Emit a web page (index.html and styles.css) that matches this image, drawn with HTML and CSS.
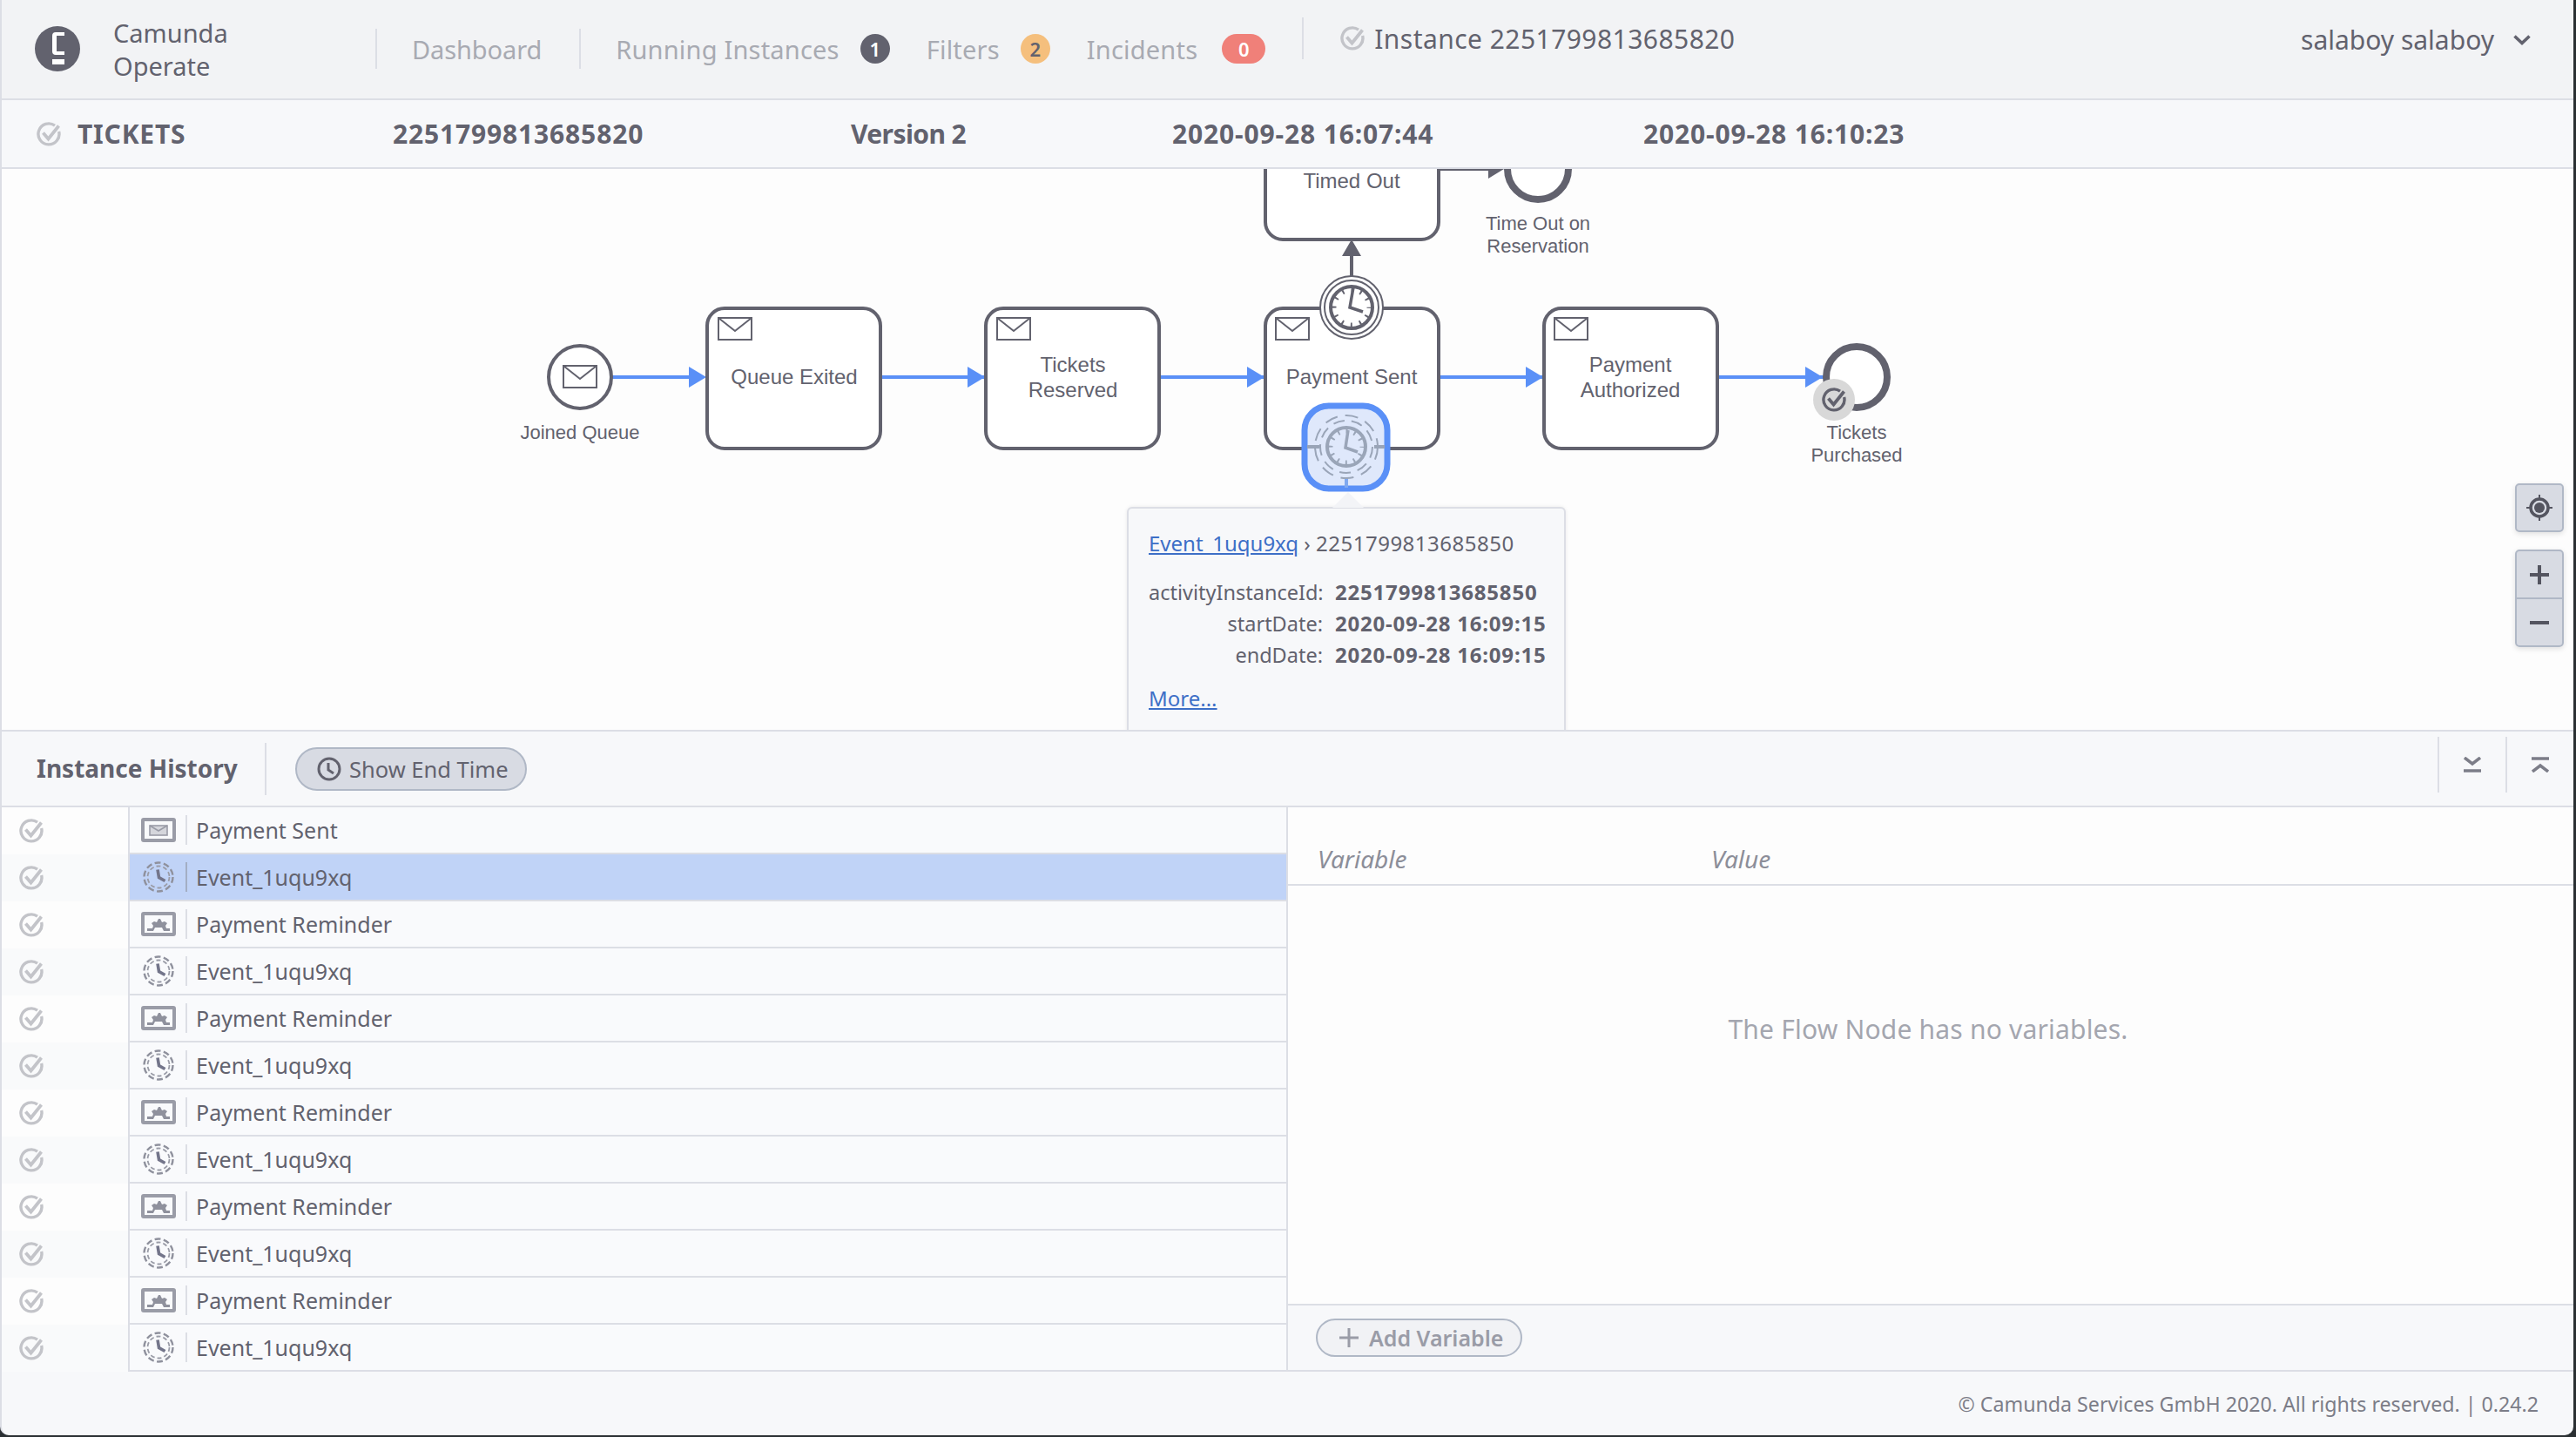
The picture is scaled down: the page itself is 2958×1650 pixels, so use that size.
FILE: index.html
```html
<!DOCTYPE html>
<html>
<head>
  <meta charset="UTF-8">
  <title>Camunda Operate</title>
  <link rel="stylesheet" href="styles.css">
</head>
<body>

  <svg class="sprites" width="0" height="0">
    <symbol id="state-done" viewBox="0 0 28 28">
      <path d="M21 4.200A12 12 0 1 0 25.600 11" fill="none" stroke="currentColor" stroke-width="3.400"/>
      <path d="M7.500 12.500l6 7L25.500 4.500" fill="none" stroke="currentColor" stroke-width="3.800"/>
    </symbol>
    <symbol id="row-msg" viewBox="0 0 40 28">
      <rect x="2" y="2" width="36" height="24" rx="1" fill="none" stroke="#9a9ca7" stroke-width="4"/>
      <rect x="10" y="9" width="20" height="11" fill="#d5d6dc" stroke="#9a9ca7" stroke-width="1.600"/>
      <path d="M10 9l10 6 10-6" fill="none" stroke="#9a9ca7" stroke-width="1.600"/>
    </symbol>
    <symbol id="row-task" viewBox="0 0 40 28">
      <rect x="2" y="2" width="36" height="24" rx="1" fill="none" stroke="#9a9ca7" stroke-width="4"/>
      <path d="M7 22h7l2-4h8l2 4h7v-3h-4l-1-3 2-3-3-2-3 1-2-4h-2l-2 4-3-1-3 2 2 3-1 3H7z" fill="#8f919d"/>
    </symbol>
    <symbol id="row-timer" viewBox="0 0 36 36">
      <circle cx="18" cy="18" r="16.500" fill="none" stroke="#8f919d" stroke-width="2.400" stroke-dasharray="7 3.400"/>
      <circle cx="18" cy="18" r="12.500" fill="none" stroke="#9a9ca7" stroke-width="1.800" stroke-dasharray="5 3"/>
      <path d="M17 9.500l1.500 9 7 4" fill="none" stroke="#73758a" stroke-width="3.600"/>
    </symbol>
    <symbol id="envelope" viewBox="0 0 40 27">
      <rect x="1" y="1" width="38" height="25" fill="#fff" stroke="#62626e" stroke-width="2"/>
      <path d="M1 1l19 15L39 1" fill="none" stroke="#62626e" stroke-width="2"/>
    </symbol>
  </svg>

  <div class="app">

    <header class="topbar">
      <svg class="logo" viewBox="0 0 52 52">
        <circle cx="26" cy="26" r="26" fill="#62626e"/>
        <path d="M34 7H24q-4 0-4 4v18q0 4 4 4h10v-4h-9V11h9z" fill="#fff"/>
        <rect x="20" y="38" width="14" height="6" fill="#fff"/>
      </svg>
      <div class="brand">Camunda<br>Operate</div>
      <nav class="nav">
        <a class="nav-link nav-first nav-home">Dashboard</a>
        <a class="nav-link nav-first">Running Instances<span class="badge badge-dark">1</span></a>
        <a class="nav-link">Filters<span class="badge badge-orange">2</span></a>
        <a class="nav-link">Incidents<span class="badge badge-red">0</span></a>
      </nav>
      <div class="instance-title">
        <svg class="state-icon"><use href="#state-done"/></svg>
        Instance 2251799813685820
      </div>
      <div class="user">
        salaboy salaboy
        <svg class="chevron" viewBox="0 0 20 12"><path d="M1.500 1.500L10 9.500l8.500-8" fill="none" stroke="#62626e" stroke-width="3.600"/></svg>
      </div>
    </header>

    <section class="summary">
      <div class="summary-name">
        <svg class="state-icon"><use href="#state-done"/></svg>
        TICKETS
      </div>
      <div>2251799813685820</div>
      <div class="summary-version">Version 2</div>
      <div>2020-09-28 16:07:44</div>
      <div>2020-09-28 16:10:23</div>
    </section>

    <section class="diagram">
      <svg class="bpmn" viewBox="0 194 2958 644" width="2958" height="644">
        <!-- sequence flows -->
        <g class="flow">
          <path d="M703 433h90"/><path d="M1012 433h121"/><path d="M1332 433h122"/><path d="M1653 433h121"/><path d="M1973 433h122"/>
        </g>
        <g class="flow-head">
          <path d="M791 421l20 12-20 12z"/><path d="M1111 421l20 12-20 12z"/><path d="M1432 421l20 12-20 12z"/><path d="M1752 421l20 12-20 12z"/><path d="M2073 421l20 12-20 12z"/>
        </g>
        <path class="grey-flow" d="M1552 318v-26M1653 194h58"/>
        <path class="grey-head" d="M1552 275l11 19h-22zM1727 194l-18 11v-22z"/>

        <!-- tasks -->
        <g class="task">
          <rect x="1453" y="114" width="199" height="161" rx="20"/>
          <rect x="812" y="354" width="199" height="161" rx="20"/>
          <rect x="1132" y="354" width="199" height="161" rx="20"/>
          <rect x="1453" y="354" width="199" height="161" rx="20"/>
          <rect x="1773" y="354" width="199" height="161" rx="20"/>
        </g>
        <use href="#envelope" x="824" y="364" width="40" height="27"/>
        <use href="#envelope" x="1144" y="364" width="40" height="27"/>
        <use href="#envelope" x="1464" y="364" width="40" height="27"/>
        <use href="#envelope" x="1784" y="364" width="40" height="27"/>

        <!-- events -->
        <circle class="event" cx="666" cy="433" r="36"/>
        <use href="#envelope" x="646" y="419" width="40" height="27"/>
        <circle class="event-end" cx="2132" cy="433" r="35"/>
        <circle class="event-end" cx="1766" cy="194" r="35"/>

        <!-- timer on top of Payment Sent -->
        <circle class="ring" cx="1552" cy="353" r="36"/>
        <circle class="ring" cx="1552" cy="353" r="31"/>
        <circle class="clock" cx="1552" cy="353" r="24"/>
        <circle class="clock-ticks" cx="1552" cy="353" r="20" stroke-dasharray="2 8.470" stroke-dashoffset="1"/>
        <path class="clock-hands" d="M1554 330l-4 23 15 5"/>

        <!-- selected timer -->
        <rect class="selected" x="1498" y="466" width="95" height="95" rx="28"/>
        <path class="stub" d="M1501 513h14M1578 513h12"/>
        <path class="stub-blue" d="M1546 548v12"/>
        <circle class="sel-ring" cx="1546" cy="513" r="36" stroke-dasharray="15 9"/>
        <circle class="sel-ring" cx="1546" cy="513" r="30" stroke-dasharray="13 8"/>
        <circle class="sel-clock" cx="1546" cy="513" r="22"/>
        <circle class="sel-ticks" cx="1546" cy="513" r="18" stroke-dasharray="2 7.420" stroke-dashoffset="1"/>
        <path class="sel-hands" d="M1548 494l-3 20 14 5"/>

        <!-- completed badge -->
        <circle cx="2106" cy="459" r="24" fill="#d8d8d8"/>
        <use href="#state-done" class="badge-check" x="2092" y="445" width="28" height="28"/>

        <g class="label">
          <text x="912" y="441">Queue Exited</text>
          <text x="1232" y="427">Tickets</text>
          <text x="1232" y="456">Reserved</text>
          <text x="1552" y="441">Payment Sent</text>
          <text x="1872" y="427">Payment</text>
          <text x="1872" y="456">Authorized</text>
          <text x="1552" y="216">Timed Out</text>
        </g>
        <g class="label-small">
          <text x="666" y="504">Joined Queue</text>
          <text x="1766" y="264">Time Out on</text>
          <text x="1766" y="290">Reservation</text>
          <text x="2132" y="504">Tickets</text>
          <text x="2132" y="530">Purchased</text>
        </g>
      </svg>

      <div class="popover">
        <div class="popover-arrow"></div>
        <div class="popover-title"><a>Event_1uqu9xq</a> › <span class="digits">2251799813685850</span></div>
        <dl class="popover-data">
          <dt>activityInstanceId:</dt><dd>2251799813685850</dd>
          <dt>startDate:</dt><dd>2020-09-28 16:09:15</dd>
          <dt>endDate:</dt><dd>2020-09-28 16:09:15</dd>
        </dl>
        <a class="popover-more">More...</a>
      </div>

      <div class="controls">
        <button class="ctl">
          <svg viewBox="0 0 32 32" width="32" height="32">
            <circle cx="16" cy="16" r="10" fill="none" stroke="#545560" stroke-width="3.500"/>
            <circle cx="16" cy="16" r="6" fill="#545560"/>
            <path d="M16 1v6M16 25v6M1 16h6M25 16h6" stroke="#545560" stroke-width="2"/>
          </svg>
        </button>
        <div class="ctl-group">
          <button class="ctl ctl-top">
            <svg viewBox="0 0 22 22" width="22" height="22"><path d="M0 11h22M11 0v22" stroke="#545560" stroke-width="4"/></svg>
          </button>
          <button class="ctl ctl-bottom">
            <svg viewBox="0 0 22 22" width="22" height="22"><path d="M0 11h22" stroke="#545560" stroke-width="4"/></svg>
          </button>
        </div>
      </div>
    </section>

    <section class="history-bar">
      <h2>Instance History</h2>
      <button class="pill">
        <svg viewBox="0 0 28 28" width="28" height="28">
          <circle cx="14" cy="14" r="12" fill="none" stroke="#62626e" stroke-width="3"/>
          <path d="M13 7v8l6 4" fill="none" stroke="#62626e" stroke-width="3"/>
        </svg>
        Show End Time
      </button>
      <div class="bar-actions">
        <button class="bar-btn">
          <svg viewBox="0 0 20 18" width="20" height="18"><path d="M1 1l9 7 9-7" fill="none" stroke="#7c7d88" stroke-width="3.500"/><path d="M0 16h20" stroke="#7c7d88" stroke-width="3.500"/></svg>
        </button>
        <button class="bar-btn">
          <svg viewBox="0 0 20 18" width="20" height="18"><path d="M0 2h20" stroke="#7c7d88" stroke-width="3.500"/><path d="M1 17l9-7 9 7" fill="none" stroke="#7c7d88" stroke-width="3.500"/></svg>
        </button>
      </div>
    </section>

    <section class="panels">
      <div class="history">
        <div class="row"><div class="cell-state"><svg class="state-icon"><use href="#state-done"/></svg></div><div class="cell-name"><svg class="type-icon"><use href="#row-msg"/></svg><span>Payment Sent</span></div></div>
        <div class="row row-alt row-selected"><div class="cell-state"><svg class="state-icon"><use href="#state-done"/></svg></div><div class="cell-name"><svg class="type-icon"><use href="#row-timer"/></svg><span>Event_1uqu9xq</span></div></div>
        <div class="row"><div class="cell-state"><svg class="state-icon"><use href="#state-done"/></svg></div><div class="cell-name"><svg class="type-icon"><use href="#row-task"/></svg><span>Payment Reminder</span></div></div>
        <div class="row row-alt"><div class="cell-state"><svg class="state-icon"><use href="#state-done"/></svg></div><div class="cell-name"><svg class="type-icon"><use href="#row-timer"/></svg><span>Event_1uqu9xq</span></div></div>
        <div class="row"><div class="cell-state"><svg class="state-icon"><use href="#state-done"/></svg></div><div class="cell-name"><svg class="type-icon"><use href="#row-task"/></svg><span>Payment Reminder</span></div></div>
        <div class="row row-alt"><div class="cell-state"><svg class="state-icon"><use href="#state-done"/></svg></div><div class="cell-name"><svg class="type-icon"><use href="#row-timer"/></svg><span>Event_1uqu9xq</span></div></div>
        <div class="row"><div class="cell-state"><svg class="state-icon"><use href="#state-done"/></svg></div><div class="cell-name"><svg class="type-icon"><use href="#row-task"/></svg><span>Payment Reminder</span></div></div>
        <div class="row row-alt"><div class="cell-state"><svg class="state-icon"><use href="#state-done"/></svg></div><div class="cell-name"><svg class="type-icon"><use href="#row-timer"/></svg><span>Event_1uqu9xq</span></div></div>
        <div class="row"><div class="cell-state"><svg class="state-icon"><use href="#state-done"/></svg></div><div class="cell-name"><svg class="type-icon"><use href="#row-task"/></svg><span>Payment Reminder</span></div></div>
        <div class="row row-alt"><div class="cell-state"><svg class="state-icon"><use href="#state-done"/></svg></div><div class="cell-name"><svg class="type-icon"><use href="#row-timer"/></svg><span>Event_1uqu9xq</span></div></div>
        <div class="row"><div class="cell-state"><svg class="state-icon"><use href="#state-done"/></svg></div><div class="cell-name"><svg class="type-icon"><use href="#row-task"/></svg><span>Payment Reminder</span></div></div>
        <div class="row row-alt"><div class="cell-state"><svg class="state-icon"><use href="#state-done"/></svg></div><div class="cell-name"><svg class="type-icon"><use href="#row-timer"/></svg><span>Event_1uqu9xq</span></div></div>
      </div>

      <div class="variables">
        <div class="var-head"><span class="var-col">Variable</span><span>Value</span></div>
        <div class="var-empty">The Flow Node has no variables.</div>
        <div class="var-foot">
          <button class="pill pill-off">
            <svg viewBox="0 0 22 22" width="22" height="22"><path d="M0 11h22M11 0v22" stroke="#9a9ca7" stroke-width="3"/></svg>
            Add Variable
          </button>
        </div>
      </div>
    </section>

    <footer class="footer">© Camunda Services GmbH 2020. All rights reserved. | 0.24.2</footer>

  </div>

</body>
</html>
```

FILE: styles.css
```css
* { box-sizing: border-box; }
body { margin: 0; background: #2b3033; font-family: "Noto Sans", sans-serif; color: #62626e; overflow: hidden; }
button { font-family: inherit; cursor: pointer; }
.sprites { position: absolute; }

.app { width: 2955px; height: 1648px; display: flex; flex-direction: column; background: #f7f8fa; border-left: 2px solid #dcdee5; border-radius: 0 0 10px 10px; overflow: hidden; }

/* top bar */
.topbar { height: 115px; flex: none; display: flex; align-items: flex-start; background: #f2f3f5; border-bottom: 2px solid #dcdee5; margin-left: -2px; }
.logo { width: 52px; height: 52px; margin: 30px 0 0 40px; flex: none; }
.brand { width: 301px; margin: 19px 0 0 38px; font-size: 29px; line-height: 38px; flex: none; }
.nav { display: flex; align-items: center; height: 46px; margin-top: 33px; font-size: 29px; letter-spacing: .2px; color: #a8aab2; }
.nav-link { display: flex; align-items: center; white-space: nowrap; margin-right: 42px; }
.nav-first { height: 46px; border-left: 2px solid #dcdee5; padding-left: 40px; }
.nav-home { margin-right: 43px; letter-spacing: -.1px; }
.badge { height: 34px; min-width: 34px; border-radius: 17px; margin-left: 24px; text-align: center; font-size: 22px; line-height: 34px; font-weight: 600; letter-spacing: 0; }
.badge-dark { background: #62626e; color: #fff; }
.badge-orange { background: #f5bf7d; color: #62626e; }
.badge-red { background: #f08079; color: #fff; width: 50px; margin-left: 28px; }
.instance-title { display: flex; align-items: center; gap: 11px; height: 48px; margin: 20px 0 0 0; padding-left: 42px; border-left: 2px solid #dcdee5; font-size: 30px; letter-spacing: .45px; white-space: nowrap; }
.state-icon { width: 28px; height: 28px; color: #c3c4c9; flex: none; }
.user { margin: 25px 0 0 auto; padding-right: 49px; display: flex; align-items: center; gap: 22px; font-size: 30px; white-space: nowrap; }
.chevron { width: 20px; height: 12px; }

/* instance summary */
.summary { height: 79px; flex: none; display: grid; grid-template-columns: 409px 526px 369px 541px 1fr; align-items: center; padding-left: 40px; background: #f7f8fa; border-bottom: 2px solid #dcdee5; font-size: 30px; font-weight: 700; letter-spacing: .85px; white-space: nowrap; }
.summary-name { display: flex; align-items: center; gap: 19px; letter-spacing: .8px; }
.summary-version { letter-spacing: -.6px; }

/* diagram */
.diagram { height: 646px; flex: none; position: relative; overflow: hidden; background: #fdfdfd; border-bottom: 2px solid #dcdee5; margin-left: -2px; }
.bpmn { display: block; }
.flow path { fill: none; stroke: #5a90f7; stroke-width: 4; }
.flow-head path { fill: #5a90f7; }
.grey-flow { fill: none; stroke: #62626e; stroke-width: 4; }
.grey-head { fill: #62626e; }
.task rect { fill: #fff; stroke: #62626e; stroke-width: 4; }
.event { fill: #fff; stroke: #62626e; stroke-width: 4; }
.event-end { fill: #fff; stroke: #62626e; stroke-width: 8; }
.ring { fill: #fff; stroke: #62626e; stroke-width: 2; }
.clock { fill: #fff; stroke: #62626e; stroke-width: 4; }
.clock-ticks { fill: none; stroke: #62626e; stroke-width: 5; }
.clock-hands { fill: none; stroke: #62626e; stroke-width: 3.500; }
.selected { fill: #dfe8fb; stroke: #5a90f7; stroke-width: 7; }
.stub { fill: none; stroke: #9aa5b8; stroke-width: 4; }
.stub-blue { fill: none; stroke: #7fa8f0; stroke-width: 4; }
.sel-ring { fill: none; stroke: #9aa5b8; stroke-width: 2; }
.sel-clock { fill: none; stroke: #9aa5b8; stroke-width: 4; }
.sel-ticks { fill: none; stroke: #9aa5b8; stroke-width: 5; }
.sel-hands { fill: none; stroke: #9aa5b8; stroke-width: 3.500; }
.badge-check { color: #62626e; }
.label text { font-family: "Liberation Sans", sans-serif; font-size: 24px; fill: #62626e; text-anchor: middle; }
.label-small text { font-family: "Liberation Sans", sans-serif; font-size: 22px; fill: #62626e; text-anchor: middle; }

.popover { position: absolute; left: 1294px; top: 388px; width: 504px; height: 300px; background: #f7f8fa; border: 2px solid #dcdee5; border-radius: 6px; padding: 24px 23px; font-size: 24px; box-shadow: 0 0 4px rgba(0, 0, 0, .08); }
.popover-arrow { position: absolute; left: 234px; top: -19px; width: 0; height: 0; border-left: 18px solid transparent; border-right: 18px solid transparent; border-bottom: 18px solid #f3f4f7; }
.popover-title { line-height: 32px; white-space: nowrap; }
.popover-title .digits { letter-spacing: .5px; }
.popover a { color: #3d6fc7; text-decoration: underline; }
.popover-data { display: grid; grid-template-columns: 200px 1fr; column-gap: 14px; row-gap: 0; margin: 22px 0 0; line-height: 36px; white-space: nowrap; }
.popover-data dt { text-align: right; font-size: 23.500px; }
.popover-data dd { margin: 0; font-weight: 700; letter-spacing: .8px; }
.popover-more { display: block; margin-top: 16px; line-height: 32px; }

.controls { position: absolute; left: 2888px; top: 361px; display: flex; flex-direction: column; gap: 20px; }
.ctl { width: 56px; height: 56px; padding: 0; display: flex; align-items: center; justify-content: center; background: #d8dbe3; border: 2px solid #b0b8c6; border-radius: 5px; box-shadow: 0 2px 6px rgba(0, 0, 0, .12); }
.ctl-group { display: flex; flex-direction: column; border-radius: 5px; box-shadow: 0 2px 6px rgba(0, 0, 0, .12); }
.ctl-top { border-radius: 5px 5px 0 0; box-shadow: none; border-bottom-width: 1px; }
.ctl-bottom { border-radius: 0 0 5px 5px; box-shadow: none; border-top-width: 1px; }

/* instance history header */
.history-bar { height: 87px; flex: none; display: flex; align-items: center; background: #f7f8fa; border-bottom: 2px solid #dcdee5; }
.history-bar h2 { margin: 0; width: 304px; height: 60px; padding-left: 40px; border-right: 2px solid #dcdee5; font-size: 28px; line-height: 59px; font-weight: 700; white-space: nowrap; }
.pill { display: flex; align-items: center; gap: 9px; margin-left: 33px; height: 50px; padding: 0 19px 0 23px; background: #d8dbe3; border: 2px solid #b0b8c6; border-radius: 25px; color: #62626e; font-size: 25.500px; white-space: nowrap; }
.bar-actions { margin: 0 0 10px auto; display: flex; }
.bar-btn { width: 78px; height: 64px; padding: 0; display: flex; align-items: center; justify-content: center; background: none; border: 0; border-left: 2px solid #dcdee5; }

/* history tree + variables */
.panels { height: 648px; flex: none; display: flex; border-bottom: 2px solid #dcdee5; }
.history { width: 1477px; flex: none; border-right: 2px solid #dcdee5; }
.row { height: 54px; display: flex; }
.cell-state { width: 147px; flex: none; display: flex; align-items: center; padding-left: 20px; background: #fdfdfd; border-right: 2px solid #dcdee5; }
.row-alt .cell-state { background: #f9fafb; }
.cell-name { flex: 1; display: flex; align-items: center; background: #f9fafc; border-bottom: 2px solid #dcdee5; font-size: 25px; padding-left: 13px; }
.row-selected .cell-name { background: #c0d3f7; }
.type-icon { width: 40px; height: 36px; flex: none; }
.cell-name span { margin-left: 11px; padding-left: 10px; border-left: 2px solid #dcdee5; line-height: 34px; white-space: nowrap; }
.row-selected .cell-name span { border-left-color: #a3aec4; }

.variables { flex: 1; display: flex; flex-direction: column; background: #fdfdfd; }
.var-head { height: 90px; flex: none; padding: 40px 0 0 34px; border-bottom: 2px solid #dcdee5; font-size: 28px; font-style: italic; color: #8c8e99; white-space: nowrap; }
.var-col { display: inline-block; width: 452px; }
.var-empty { flex: 1; padding: 144px 6px 0 0; text-align: center; font-size: 30px; letter-spacing: .2px; color: #a4a6af; }
.var-foot { height: 76px; flex: none; display: flex; align-items: center; background: #f7f8fa; border-top: 2px solid #dcdee5; }
.pill-off { height: 44px; margin-left: 32px; padding: 0 20px 0 25px; gap: 12px; background: #f1f2f5; border-color: #b0b8c6; border-radius: 22px; color: #9a9ca7; font-weight: 600; font-size: 25px; }

.footer { flex: 1; display: flex; align-items: center; justify-content: flex-end; padding: 0 40px 0 0; font-size: 23.200px; color: #7c7d88; white-space: nowrap; }
```
